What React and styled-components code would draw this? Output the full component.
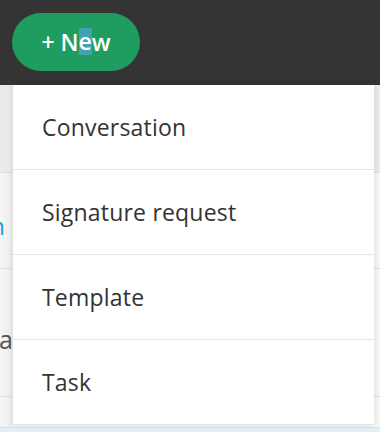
import React from 'react';
import styled, { createGlobalStyle } from 'styled-components';

const GlobalStyle = createGlobalStyle`
  html, body {
    margin: 0;
    padding: 0;
    background: #f5f5f5;
    font-family: "Open Sans", Lato, sans-serif;
  }
  #root {
    width: 380px;
    height: 432px;
    overflow: hidden;
  }
`;

const Page = styled.div`
  position: relative;
  width: 380px;
  height: 432px;
  display: flex;
  flex-direction: column;
  background: #f5f5f5;
`;

const Header = styled.header`
  height: 85px;
  flex-shrink: 0;
  background: #343434;
  display: flex;
  align-items: flex-start;
  padding: 13px 0 0 12px;
  box-sizing: border-box;
`;

const NewButton = styled.button`
  width: 128px;
  height: 58px;
  border: 0;
  border-radius: 29px;
  background: #1f9d60;
  color: #fff;
  font-family: "Open Sans", sans-serif;
  font-size: 23px;
  font-weight: 600;
  display: flex;
  align-items: center;
  justify-content: center;
  padding: 0 0 1px;
  cursor: pointer;
`;

const Selected = styled.span`
  background: #3fa4b2;
  display: inline-block;
  line-height: 27px;
`;

const Backdrop = styled.div`
  flex: 1;
  display: flex;
  flex-direction: column;
  background: linear-gradient(to right, #f6f6f6 0, #ececec 13px, #f7f7f7 13px);
`;

const BackRow = styled.div`
  height: ${({ $h }) => $h}px;
  flex-shrink: 0;
  border-bottom: 1px solid #dedede;
  background: ${({ $shade }) => ($shade ? '#eaeaea' : 'transparent')};
  display: flex;
  align-items: center;
`;

const Peek = styled.div`
  width: ${({ $w }) => $w}px;
  overflow: hidden;
  white-space: nowrap;
  direction: rtl;
  font-size: ${({ $size }) => $size}px;
  color: ${({ $color }) => $color};
  margin-top: ${({ $top }) => $top || 0}px;
`;

const Tail = styled.div`
  flex: 1;
  background: #e4eef5;
`;

const Menu = styled.ul`
  position: absolute;
  top: 85px;
  left: 13px;
  width: 361px;
  margin: 0;
  padding: 0;
  list-style: none;
  background: #fff;
  box-shadow: 0 0 6px rgba(0, 0, 0, 0.12);
`;

const MenuItem = styled.li`
  height: 84px;
  border-bottom: 1px solid #e6e6e6;
  display: flex;
  align-items: center;
  padding-left: 29px;
  font-size: 23px;
  color: #333;
  letter-spacing: 0.2px;
`;

const items = ['Conversation', 'Signature request', 'Template', 'Task'];

const App = () => (
  <>
    <GlobalStyle />
    <Page>
      <Header>
        <NewButton>
          + N<Selected>e</Selected>w
        </NewButton>
      </Header>
      <Backdrop>
        <BackRow $h={87} $shade />
        <BackRow $h={95}>
          <Peek $w={5} $size={24} $color="#1b9fd9" $top={10}>
            n
          </Peek>
        </BackRow>
        <BackRow $h={127}>
          <Peek $w={13} $size={25} $color="#555" $top={12}>
            a
          </Peek>
        </BackRow>
        <BackRow $h={30} />
        <Tail />
      </Backdrop>
      <Menu>
        {items.map((label) => (
          <MenuItem key={label}>{label}</MenuItem>
        ))}
      </Menu>
    </Page>
  </>
);

export default App;
